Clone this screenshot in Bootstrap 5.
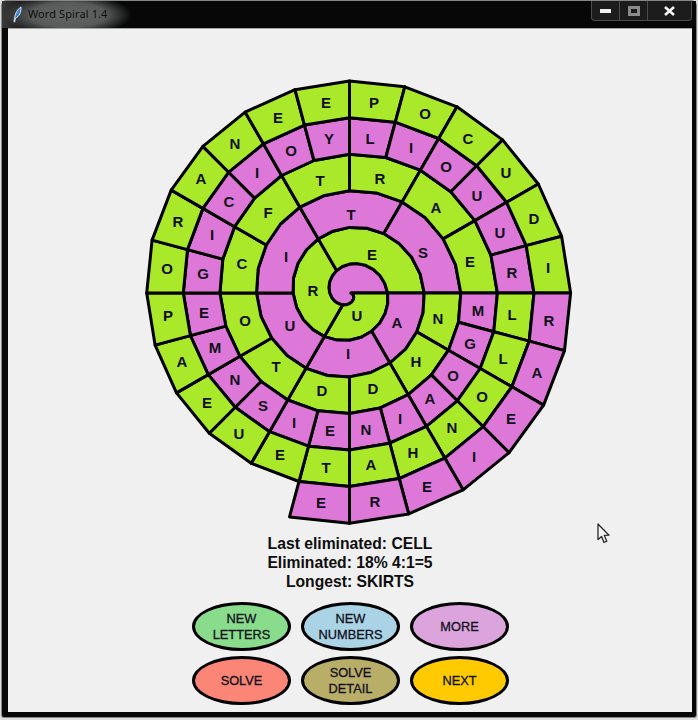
<!DOCTYPE html>
<html lang="en">
<head>
<meta charset="utf-8">
<title>Word Spiral 1.4</title>
<link href="https://cdn.jsdelivr.net/npm/bootstrap@5.3.0/dist/css/bootstrap.min.css" rel="stylesheet">
<style>
html,body{height:100%;margin:0;overflow:hidden}
body{background:#dedede;font-family:"Liberation Sans",Arial,sans-serif}
.win-frame{position:relative;width:696px;height:718px;margin-left:1px;background:#070707;border:1px solid #858585;border-radius:6px 6px 3px 3px;box-sizing:border-box}
.win-title{height:27px;padding-left:10px;background:radial-gradient(ellipse 64px 21px at 66px 14px,#646666 0%,#585a5a 60%,rgba(40,40,40,0) 100%),linear-gradient(90deg,#3a3a3a 0,#1c1c1c 18px,#070707 40px)}
.win-name{font-family:"Noto Sans",sans-serif;font-size:11px;color:#0d0d0d;margin-left:6px;margin-top:-1px;letter-spacing:.1px}
.win-ctrls{height:20px;margin-right:4px;align-self:flex-start;border:1px solid #4c4c4c;border-top:0;border-radius:0 0 4px 4px;background:#1c1c1c}
.win-ctrl{height:100%;border-left:1px solid #4c4c4c}
.win-ctrl:first-child{border-left:0}
.ctrl-min{width:27px}.ctrl-max{width:28px}.ctrl-close{width:44px}
.win-client{margin:0 4px 0 6px;height:684px;background:#f0f0f0;border-top:1px solid #a4a4a4;box-sizing:border-box}
.spiral-svg{display:block;width:460px;height:460px;margin-top:41px}
.spiral-line{stroke:#000;stroke-width:3;stroke-linejoin:round;stroke-linecap:round}
.fill-g{fill:#aae82a}.fill-p{fill:#de78d8}
.spiral-txt{font:bold 15px "Liberation Sans",Arial,sans-serif;fill:#10101a;text-anchor:middle;dominant-baseline:central}
.score-lines{margin-top:4px;font-weight:700;font-size:15.7px;line-height:19.2px;color:#0e0e0e}
.oval-grid{display:grid;grid-template-columns:repeat(3,99px);column-gap:10px;row-gap:5px;margin:10.4px 0 0 1px}
.oval-btn{width:99px;height:49px;padding:0;border:3px solid #000;border-radius:50%;color:#10101a;font-size:12.8px;line-height:15.5px;font-family:"Liberation Sans",Arial,sans-serif;font-weight:400;-webkit-text-stroke:.3px #10101a}
.oval-btn:hover{border-color:#000;color:#10101a}
.oval-a{background:#88dc8c}.oval-b{background:#aad4e6}.oval-c{background:#dca4dc}
.oval-d{background:#fb8577}.oval-e{background:#b9ae68}.oval-f{background:#ffcb00}
.mouse-arrow{position:absolute;left:594px;top:522px;width:16px;height:22px}
</style>
</head>
<body>
<div class="win-frame d-flex flex-column">
  <div class="win-title d-flex align-items-center">
    <svg width="10" height="17" viewBox="0 0 10 17" aria-hidden="true"><path d="M2 16 C2.5 10 4 4 9 1 C9.5 6 7 11 3.5 12 L2.6 16Z" fill="#3f86cf" stroke="#e3f0fb" stroke-width=".9"/></svg>
    <span class="win-name">Word Spiral 1.4</span>
    <div class="win-ctrls d-flex ms-auto">
      <div class="win-ctrl ctrl-min d-flex align-items-center justify-content-center"><svg width="12" height="5" aria-hidden="true"><rect width="11" height="4" y="1" fill="#f0f0f0"/></svg></div>
      <div class="win-ctrl ctrl-max d-flex align-items-center justify-content-center"><svg width="12" height="10" aria-hidden="true"><rect x="1.5" y="1.5" width="9" height="7" fill="none" stroke="#8a8a8a" stroke-width="3"/></svg></div>
      <div class="win-ctrl ctrl-close d-flex align-items-center justify-content-center"><svg width="11" height="10" aria-hidden="true"><path d="M1 1 L10 9 M10 1 L1 9" stroke="#f4f4f4" stroke-width="2.6"/></svg></div>
    </div>
  </div>
  <div class="win-client d-flex flex-column align-items-center">
    <svg id="spiral" class="spiral-svg" viewBox="120 70 460 460" role="img" aria-label="Spiral of letters"></svg>
    <div class="score-lines text-center">
      <div>Last eliminated: CELL</div>
      <div>Eliminated: 18% 4:1=5</div>
      <div>Longest: SKIRTS</div>
    </div>
    <div class="oval-grid">
      <button type="button" class="btn oval-btn oval-a">NEW<br>LETTERS</button>
      <button type="button" class="btn oval-btn oval-b">NEW<br>NUMBERS</button>
      <button type="button" class="btn oval-btn oval-c">MORE</button>
      <button type="button" class="btn oval-btn oval-d">SOLVE</button>
      <button type="button" class="btn oval-btn oval-e">SOLVE<br>DETAIL</button>
      <button type="button" class="btn oval-btn oval-f">NEXT</button>
    </div>
  </div>
  <svg class="mouse-arrow" viewBox="0 0 16 22" aria-hidden="true"><path d="M2 1 L2 16.5 L5.6 13.4 L8 19.5 L10.8 18.2 L8.3 12.4 L13 12.2 Z" fill="#f4f4f4" stroke="#2a2a2a" stroke-width="1.3" stroke-linejoin="round"/></svg>
</div>
<script>
(function () {
  var cx = 349.5, cy = 293, a = 36.6, off = 1.5, NS = "http://www.w3.org/2000/svg";
  var svg = document.getElementById("spiral");
  function pt(turns) {
    var t = turns * 2 * Math.PI, r = a * turns + off;
    return (cx + r * Math.cos(t)).toFixed(1) + " " + (cy + r * Math.sin(t)).toFixed(1);
  }
  function addPath(d, cls) {
    var p = document.createElementNS(NS, "path");
    p.setAttribute("d", "M" + d.join(" L") + " Z");
    p.setAttribute("class", "spiral-line " + cls);
    svg.appendChild(p);
  }
  function cell(start, end, cls) {
    var d = [], s;
    for (s = start; s <= end; s += 15) d.push(pt(s / 360));
    for (s = end + 360; s >= start + 360; s -= 15) d.push(pt(s / 360));
    addPath(d, cls);
  }
  /* the unlettered pink heart of the spiral, then the six bands, in degrees walked clockwise from due east */
  var heart = [];
  for (var s = 0; s <= 360; s += 15) heart.push(pt(s / 360));
  addPath(heart, "fill-p");
  var bands = [[0, 120, 3, "fill-g"], [360, 60, 6, "fill-p"], [720, 30, 12, "fill-g"],
               [1080, 15, 24, "fill-p"], [1440, 15, 24, "fill-g"], [1800, 15, 7, "fill-p"]];
  bands.forEach(function (b) {
    for (var i = 0; i < b[2]; i++) cell(b[0] + i * b[1], b[0] + (i + 1) * b[1], b[3]);
  });
  var letters = "U357,315 R313,290 E372,254 A397,322 I348,353 U290,325 I286,256 T351,214 S423,252 " +
    "N438,318 H416,361 D373,388 D322,390 T276,366 O245,320 C242,263 F268,212 T320,180 R380,178 A436,207 E470,261 " +
    "M478,310 G470,343 O453,375 A430,398 I400,418 N366,429 E330,430 I294,422 S263,405 N235,379 M215,347 E204,312 " +
    "G203,273 I212,234 C229,201 I257,172 O291,150 Y329,138 L370,138 I411,147 O446,166 U477,195 U500,232 R512,272 " +
    "L512,314 L503,358 O482,396 N452,427 H413,452 A371,464 T326,467 E280,454 U239,433 E207,402 A182,361 P168,315 " +
    "O167,268 R178,221 A201,178 N235,143 E278,117 E326,102 P374,102 O425,113 C468,138 U506,172 D534,218 I548,267 " +
    "R549,320 A537,372 E511,418 I474,456 E427,486 R375,501 E321,502";
  letters.split(" ").forEach(function (item) {
    var xy = item.slice(1).split(",");
    var t = document.createElementNS(NS, "text");
    t.setAttribute("x", xy[0]);
    t.setAttribute("y", xy[1]);
    t.setAttribute("class", "spiral-txt");
    t.textContent = item[0];
    svg.appendChild(t);
  });
})();
</script>
<script src="https://cdn.jsdelivr.net/npm/bootstrap@5.3.0/dist/js/bootstrap.bundle.min.js"></script>
</body>
</html>
